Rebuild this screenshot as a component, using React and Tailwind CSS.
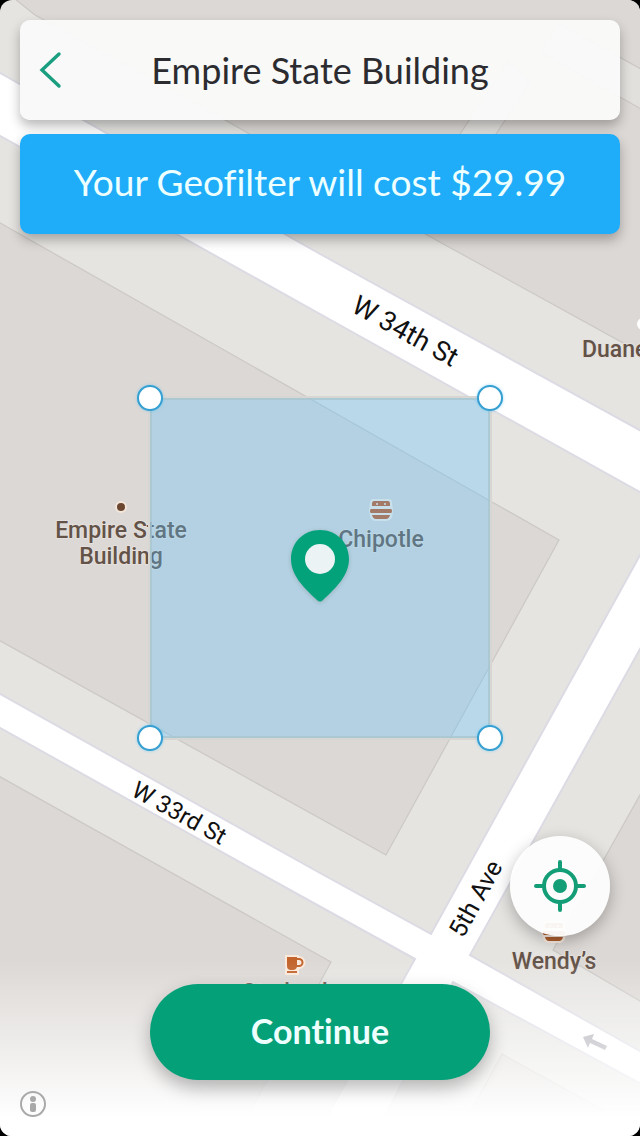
import React, { useState } from "react";

const blocks = [
  "10,-5 35,15 225,120 427,235 645,355 645,-5",
  "-5,220 559,540 386,855 -5,638",
  "-5,774 331,962 235,1140 -5,1140",
  "645,786 553,950 645,1004",
  "502,1054 645,1133 645,1140 455,1140",
];

const burgers = [
  { x: 381, y: 510, fill: "#c4581f" },
  { x: 554, y: 932, fill: "#b0602f" },
];

const Burger = ({ x, y, fill }) => (
  <g transform={`translate(${x} ${y})`}>
    <path
      d="M-8-11H8Q11-11 11-7L12 0 11 7Q9 11 5 11H-5Q-9 11-11 7L-12 0-11-7Q-11-11-8-11Z"
      fill="#fbeee4"
    />
    <path
      d="M-7-9H7Q9-9 9-6V-4H-9V-6Q-9-9-7-9ZM-10-1H10Q11-1 11 1T10 3H-10Q-11 3-11 1T-10-1ZM-9 5H9Q8 9 5 9H-5Q-8 9-9 5Z"
      fill={fill}
    />
    <circle cx="-4" cy="-6" r="1" fill="#fbeee4" />
    <circle cx="4" cy="-6" r="1" fill="#fbeee4" />
  </g>
);

const StreetMap = () => (
  <svg
    viewBox="0 0 640 1136"
    preserveAspectRatio="xMidYMid slice"
    className="absolute inset-0 h-full w-full bg-[#e5e4e1]"
    aria-label="Map of Midtown Manhattan"
  >
    {/* Buildings */}
    <g fill="#dcd8d5" stroke="#cbc8c5" strokeWidth="1.2">
      {blocks.map((points) => (
        <polygon key={points} points={points} />
      ))}
    </g>
    <g fill="#e2e0dd" stroke="#cbc8c5" strokeWidth="1.2">
      <path d="M508 62 460 134 454 146H488L496 134 530 82Z" />
      <path d="M560 24 650 74V114L540 52Z" />
    </g>

    {/* Roads */}
    <g fill="#fff" stroke="#dcdbe4" strokeWidth="2">
      <path d="M-5 70 320 254 645 433V495L320 314-5 133Z" />
      <path d="M-5 691 320 873 431 934 645 546V640L530 847 470 955 645 1054V1086L453 982 373 1140H314L415 959 272 880-5 725Z" />
    </g>
    <path
      d="M583 1037 594 1034 592 1039 607 1046 605 1050 590 1043 588 1048Z"
      fill="#a5a4ae"
    />

    {/* Street names */}
    <g className="font-[Roboto,sans-serif]" fill="#111">
      <text fontSize="27" transform="translate(350 311) rotate(29)">W 34th St</text>
      <text fontSize="24" transform="translate(130 795) rotate(29)">W 33rd St</text>
      <text fontSize="25" transform="translate(463 939) rotate(-61)">5th Ave</text>
    </g>

    {/* Places */}
    <g
      className="font-[Roboto,sans-serif]"
      fontSize="23"
      fontWeight="500"
      fill="#635248"
      stroke="#e6e0dc"
      strokeWidth="2"
      strokeLinejoin="round"
      paintOrder="stroke"
      textAnchor="middle"
    >
      <text x="121" y="538">Empire State</text>
      <text x="121" y="564">Building</text>
      <text x="381" y="547">Chipotle</text>
      <text x="554" y="969">Wendy’s</text>
      <text x="294" y="1000">Starbucks</text>
      <text x="582" y="357" textAnchor="start">Duane</text>
    </g>
    <circle cx="121" cy="507" r="5" fill="#6b4630" stroke="#f3e7dc" strokeWidth="2" />
    <circle cx="643" cy="324" r="6" fill="#fff" />
    {burgers.map((burger) => (
      <Burger key={burger.x} {...burger} />
    ))}
    <path
      d="M287 957H297V958H299A4 4 0 0 1 299 967H297Q296 970 293 970H291Q287 970 287 966ZM297 960V965H299A2 2 0 0 0 299 960ZM287 971H297V973H287Z"
      fill="#c2642b"
      fillRule="evenodd"
      stroke="#fbe9dc"
      strokeWidth="4"
      paintOrder="stroke"
    />
  </svg>
);

const Handle = ({ className, label }) => (
  <button
    aria-label={label}
    className={`absolute size-[26px] rounded-full border-2 border-[#349fd0] bg-white shadow-[0_0_3px_rgba(80,190,250,0.6)] ${className}`}
  />
);

const App = () => {
  const [price] = useState("29.99");

  return (
    <div className="bg-black font-[Lato,sans-serif] [font-variant-ligatures:none]">
      <div className="relative min-h-screen overflow-hidden rounded-xl">
        <StreetMap />

        {/* Selected area */}
        <div className="absolute inset-0 flex items-center justify-center">
          <div className="relative flex size-[340px] justify-center border-2 border-[#a9c5d0]/80 bg-[#5ec5ff]/32 pt-[128px] outline-2 outline-[#d8d6d2]">
            <Handle label="Top left corner" className="-left-[15px] -top-[15px]" />
            <Handle label="Top right corner" className="-right-[15px] -top-[15px]" />
            <Handle label="Bottom left corner" className="-bottom-[15px] -left-[15px]" />
            <Handle label="Bottom right corner" className="-bottom-[15px] -right-[15px]" />
            <svg viewBox="0 0 60 76" className="h-[76px] w-[60px] drop-shadow-sm">
              <path
                d="M30 2C13 2 1 15 1 31C1 47 13 59 27 72Q30 75 33 72C47 59 59 47 59 31C59 15 47 2 30 2Z"
                fill="#04a27b"
              />
              <circle cx="30" cy="31" r="15" fill="#ebf3f5" />
            </svg>
          </div>
        </div>

        {/* Bottom fade */}
        <div className="absolute inset-x-0 bottom-0 h-44 bg-linear-to-t from-white from-10% to-white/0" />

        <div className="relative flex min-h-screen flex-col px-5 pb-[19px] pt-5">
          <header className="grid h-[100px] grid-cols-[60px_1fr_60px] items-center rounded-[10px] bg-[#f9f9f9]/98 shadow-[0_6px_12px_rgba(0,0,0,0.28)]">
            <button aria-label="Back" className="flex h-full items-center justify-center text-[#1a9e80]">
              <svg viewBox="0 0 24 38" className="h-[38px] w-6">
                <path
                  d="M21 3 4 19 21 35"
                  fill="none"
                  stroke="currentColor"
                  strokeWidth="3.4"
                  strokeLinecap="round"
                />
              </svg>
            </button>
            <h1 className="text-center text-[36px] text-[#2c2c30]">Empire State Building</h1>
          </header>

          <div className="mt-[14px] flex h-[100px] items-center justify-center rounded-[10px] bg-[#1fadfa] pb-1 text-[37px] text-[#edffff] shadow-[0_6px_12px_rgba(0,0,0,0.28)]">
            <p>Your Geofilter will cost ${price}</p>
          </div>

          <button
            aria-label="Current location"
            className="mb-12 mr-[10px] mt-auto flex size-[100px] items-center justify-center self-end rounded-full bg-[#fdfdfd]/95 text-[#149e77] shadow-[0_5px_16px_rgba(0,0,0,0.28)]"
          >
            <svg viewBox="0 0 54 54" className="size-[54px]">
              <g fill="none" stroke="currentColor" strokeWidth="4" strokeLinecap="round">
                <circle cx="27" cy="27" r="16" />
                <path d="M27 3V11M27 43V51M3 27H11M43 27H51" />
              </g>
              <circle cx="27" cy="27" r="7" fill="currentColor" />
            </svg>
          </button>

          <button className="h-24 w-[340px] self-center rounded-full bg-[#04a078] pb-1 text-[34px] font-bold text-[#edffff] shadow-[0_8px_18px_rgba(0,0,0,0.28)]">
            Continue
          </button>

          <button aria-label="Map info" className="mt-[11px] size-[26px] self-start text-[#a9a9a9]">
            <svg viewBox="0 0 26 26" className="size-[26px]">
              <circle cx="13" cy="13" r="12" fill="none" stroke="currentColor" strokeWidth="2" />
              <circle cx="13" cy="8" r="3" fill="currentColor" />
              <rect x="10" y="12" width="6" height="9" rx="2" fill="currentColor" />
            </svg>
          </button>
        </div>
      </div>
    </div>
  );
};

export default App;
